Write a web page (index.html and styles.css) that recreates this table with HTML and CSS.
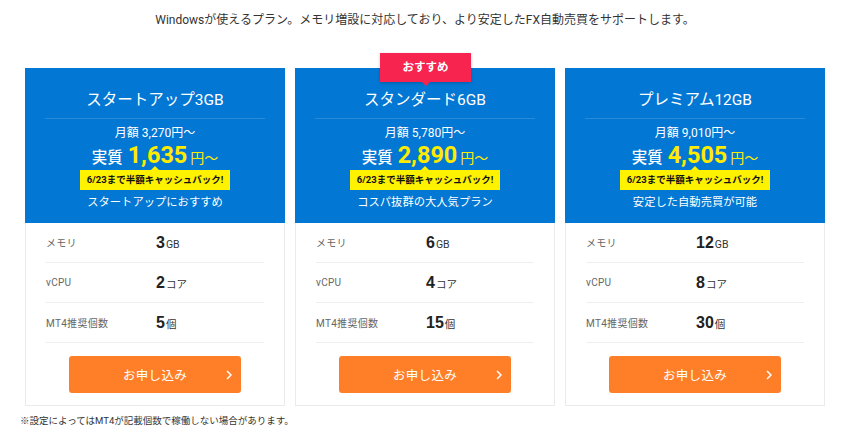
FILE: index.html
```html
<!DOCTYPE html>
<html lang="ja">
<head>
<meta charset="utf-8">
<title>プラン</title>
<link rel="stylesheet" href="styles.css">
</head>
<body>
<div class="page">
  <p class="lead">Windowsが使えるプラン。メモリ増設に対応しており、より安定したFX自動売買をサポートします。</p>
  <div class="plans">
    <div class="card">
      <div class="head">
        <div class="title">スタートアップ3GB</div>
        <div class="monthly">月額 3,270円〜</div>
        <div class="real"><span class="real-l">実質</span><span class="real-n">1,635</span><span class="real-u">円〜</span></div>
        <div class="tag">6/23まで半額キャッシュバック!</div>
        <div class="sub">スタートアップにおすすめ</div>
      </div>
      <ul class="specs">
        <li class="row"><span class="lbl">メモリ</span><span class="val"><b>3</b><small>GB</small></span></li>
        <li class="row"><span class="lbl">vCPU</span><span class="val"><b>2</b><small>コア</small></span></li>
        <li class="row"><span class="lbl">MT4推奨個数</span><span class="val"><b>5</b><small>個</small></span></li>
      </ul>
      <a class="btn">お申し込み<svg class="chev" width="6" height="10" viewBox="0 0 6 10"><polyline points="1,1 5,5 1,9" fill="none" stroke="#fff" stroke-width="1.5"/></svg></a>
    </div>
    <div class="card">
      <div class="badge">おすすめ</div>
      <div class="head">
        <div class="title">スタンダード6GB</div>
        <div class="monthly">月額 5,780円〜</div>
        <div class="real"><span class="real-l">実質</span><span class="real-n">2,890</span><span class="real-u">円〜</span></div>
        <div class="tag">6/23まで半額キャッシュバック!</div>
        <div class="sub">コスパ抜群の大人気プラン</div>
      </div>
      <ul class="specs">
        <li class="row"><span class="lbl">メモリ</span><span class="val"><b>6</b><small>GB</small></span></li>
        <li class="row"><span class="lbl">vCPU</span><span class="val"><b>4</b><small>コア</small></span></li>
        <li class="row"><span class="lbl">MT4推奨個数</span><span class="val"><b>15</b><small>個</small></span></li>
      </ul>
      <a class="btn">お申し込み<svg class="chev" width="6" height="10" viewBox="0 0 6 10"><polyline points="1,1 5,5 1,9" fill="none" stroke="#fff" stroke-width="1.5"/></svg></a>
    </div>
    <div class="card">
      <div class="head">
        <div class="title">プレミアム12GB</div>
        <div class="monthly">月額 9,010円〜</div>
        <div class="real"><span class="real-l">実質</span><span class="real-n">4,505</span><span class="real-u">円〜</span></div>
        <div class="tag">6/23まで半額キャッシュバック!</div>
        <div class="sub">安定した自動売買が可能</div>
      </div>
      <ul class="specs">
        <li class="row"><span class="lbl">メモリ</span><span class="val"><b>12</b><small>GB</small></span></li>
        <li class="row"><span class="lbl">vCPU</span><span class="val"><b>8</b><small>コア</small></span></li>
        <li class="row"><span class="lbl">MT4推奨個数</span><span class="val"><b>30</b><small>個</small></span></li>
      </ul>
      <a class="btn">お申し込み<svg class="chev" width="6" height="10" viewBox="0 0 6 10"><polyline points="1,1 5,5 1,9" fill="none" stroke="#fff" stroke-width="1.5"/></svg></a>
    </div>
  </div>
  <p class="note">※設定によってはMT4が記載個数で稼働しない場合があります。</p>
</div>
</body>
</html>
```
FILE: styles.css
```css
* { box-sizing: border-box; }
html, body { margin: 0; padding: 0; background: #fff; }
body {
  font-family: Roboto, "Noto Sans CJK JP", sans-serif;
  color: #333;
  width: 850px;
}
.page { padding-top: 11px; }
.lead {
  margin: 0;
  text-align: center;
  font-size: 12px;
  line-height: 18px;
  color: #333;
}
.plans {
  display: flex;
  gap: 10px;
  margin: 39px 0 0 25px;
}
.card {
  position: relative;
  width: 260px;
  border: 1px solid #ebebeb;
  border-top: none;
  padding-bottom: 12px;
}
.head {
  background: #0277d3;
  color: #fff;
  margin: 0 -1px;
  padding: 20px 20px 11px;
  text-align: center;
}
.title {
  font-size: 15.5px;
  line-height: 24px;
  padding-bottom: 6px;
  border-bottom: 1px solid #2a8bd9;
}
.monthly {
  margin-top: 6px;
  font-size: 12px;
  line-height: 16px;
}
.real {
  height: 28px;
  line-height: 28px;
  display: flex;
  justify-content: center;
  align-items: baseline;
}
.real-l { font-size: 15.5px; font-weight: 500; margin-right: 5px; }
.real-n { font-size: 23.5px; font-weight: 700; color: #ffeb00; font-family: Roboto, sans-serif; margin-right: 3px; }
.real-u { font-size: 14px; color: #ffeb00; }
.tag {
  position: relative;
  margin: 1px auto 0;
  width: 150px;
  height: 20px;
  line-height: 20px;
  background: #fff200;
  color: #111;
  font-size: 9.5px;
  font-weight: 700;
  white-space: nowrap;
}
.tag::before {
  content: "";
  position: absolute;
  left: 50%;
  top: -4px;
  margin-left: -4px;
  border-left: 4px solid transparent;
  border-right: 4px solid transparent;
  border-bottom: 4px solid #fff200;
}
.sub {
  margin-top: 4px;
  font-size: 11.3px;
  line-height: 18px;
}
.specs {
  list-style: none;
  margin: 0;
  padding: 0 20px;
}
.row {
  display: flex;
  align-items: center;
  height: 40px;
  border-bottom: 1px solid #efefef;
}
.lbl {
  width: 110px;
  font-size: 10px;
  color: #666;
  letter-spacing: 0.3px;
}
.val b {
  font-family: "Liberation Sans", Arial, sans-serif;
  font-size: 16px;
  font-weight: 700;
  color: #222;
}
.val small {
  font-size: 10.5px;
  font-weight: 400;
  color: #333;
  margin-left: 1px;
}
.btn {
  display: flex;
  align-items: center;
  justify-content: center;
  position: relative;
  width: 172px;
  height: 37px;
  margin: 13px auto 0;
  background: #ff7f29;
  border-radius: 3px;
  color: #fff;
  font-size: 12.5px;
  letter-spacing: 0.3px;
}
.chev {
  position: absolute;
  right: 9px;
  top: 14px;
}
.badge {
  position: absolute;
  top: -15px;
  left: 84px;
  width: 91px;
  height: 29px;
  line-height: 29px;
  background: #f6244f;
  color: #fff;
  text-align: center;
  font-size: 11.5px;
  font-weight: 700;
  box-shadow: 0 1px 3px rgba(0,0,0,0.2);
  z-index: 2;
}
.badge::after {
  content: "";
  position: absolute;
  left: 50%;
  bottom: -4px;
  margin-left: -4px;
  border-left: 4px solid transparent;
  border-right: 4px solid transparent;
  border-top: 4px solid #f6244f;
}
.note {
  margin: 8px 0 0 20px;
  font-size: 9.5px;
  line-height: 14px;
  color: #333;
}
```
